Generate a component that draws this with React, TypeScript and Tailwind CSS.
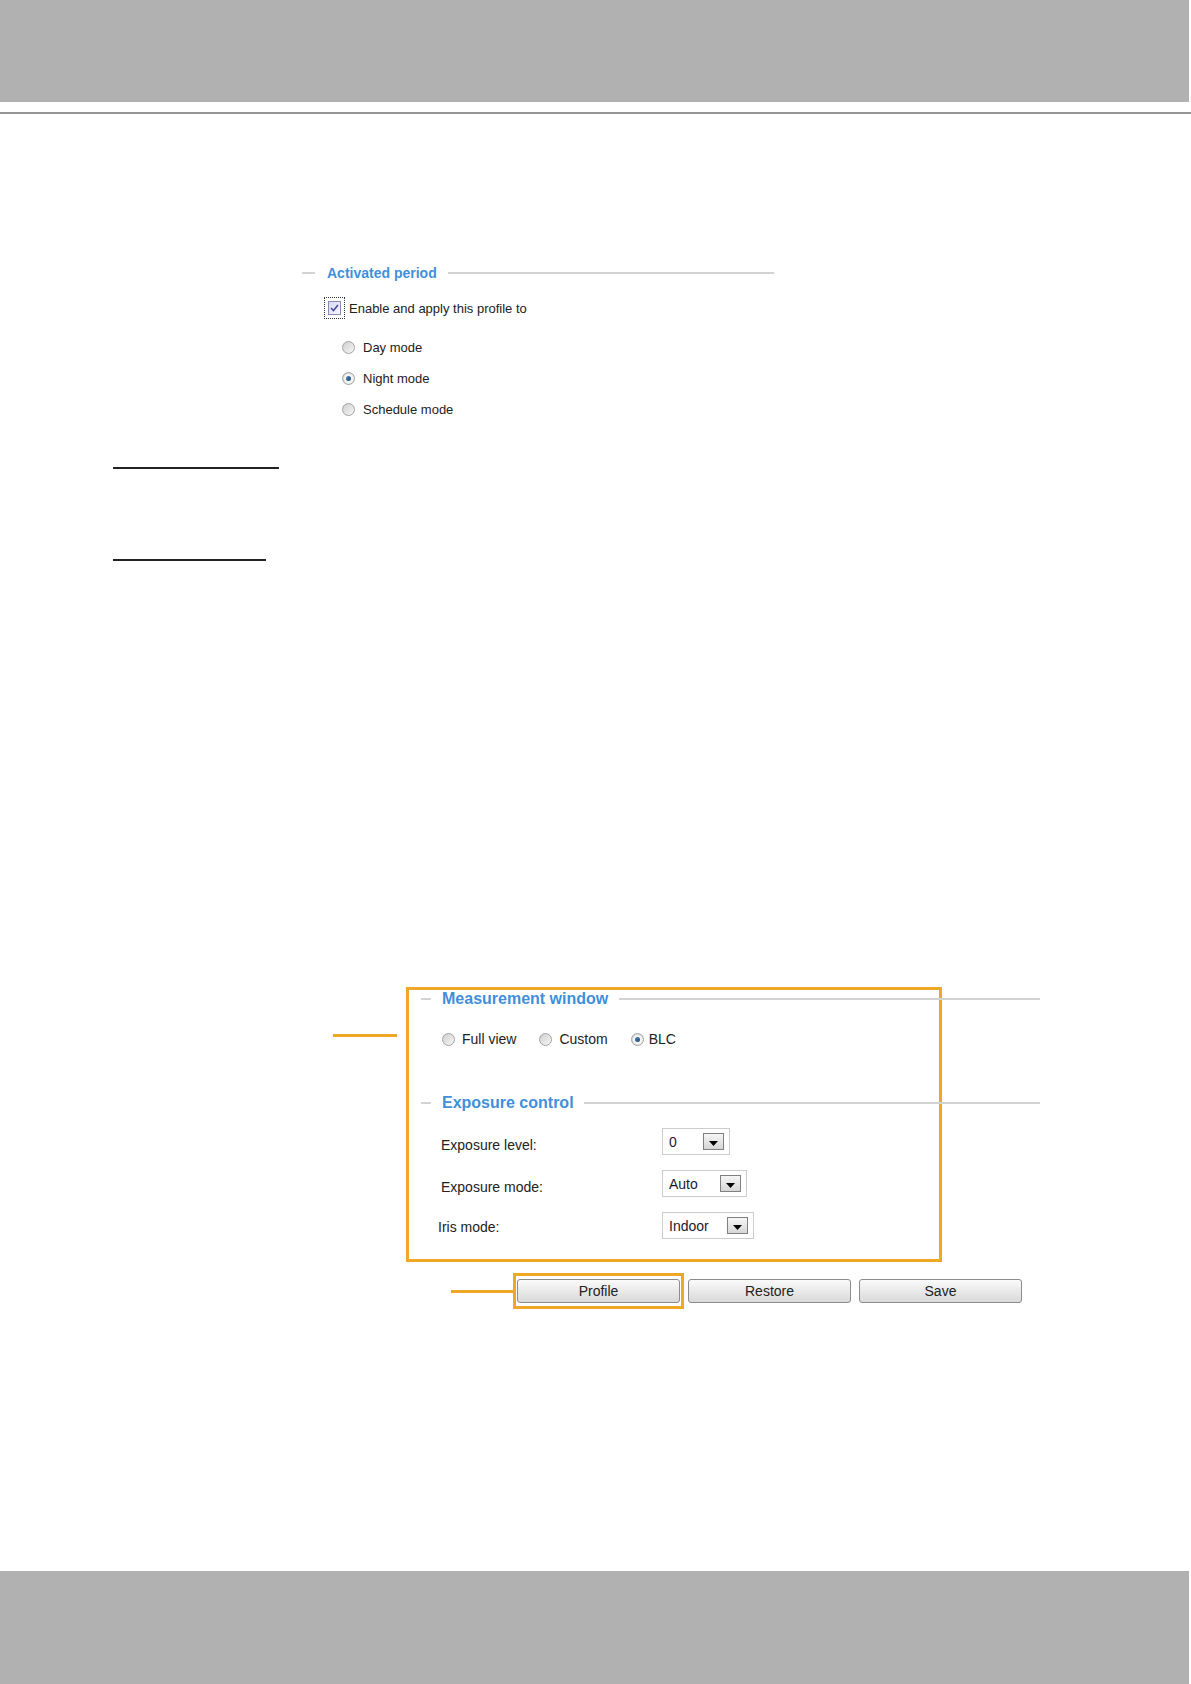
import React from "react";

const font = "font-['Liberation_Sans',Arial,sans-serif]";

function Legend({ title, dash, gap, lineGap, width }: { title: string; dash: number; gap: number; lineGap: number; width: number }) {
  return (
    <div className="flex h-[18px] items-center" style={{ width }}>
      <div className="h-[2px] bg-[#d3d3d3]" style={{ width: dash }} />
      <span
        className="whitespace-nowrap font-bold leading-none text-[#3f8fdb]"
        style={{ marginLeft: gap, marginRight: lineGap }}
      >
        {title}
      </span>
      <div className="h-[2px] flex-1 bg-[#d3d3d3]" />
    </div>
  );
}

function Radio({ checked = false }: { checked?: boolean }) {
  return (
    <span className="flex h-[13px] w-[13px] shrink-0 items-center justify-center rounded-full border border-[#a2a2a2] bg-gradient-to-br from-[#cfcfcf] to-[#f7f7f7]">
      {checked && (
        <span className="flex h-[9px] w-[9px] items-center justify-center rounded-full bg-[#f4f4f4]">
          <span className="h-[5px] w-[5px] rounded-full bg-gradient-to-br from-[#4a86b8] to-[#1d4a73]" />
        </span>
      )}
    </span>
  );
}

function Select({ value, width }: { value: string; width: number }) {
  return (
    <div
      className="flex h-[27px] items-center border border-[#cccccc] bg-white pl-[6px] pr-[5px]"
      style={{ width }}
    >
      <span className="text-[14px] leading-none text-[#1a1a2e]">{value}</span>
      <span className="ml-auto flex h-[17px] w-[21px] items-end justify-center border border-[#808080] bg-gradient-to-b from-[#f6f6f6] to-[#d6d6d6] pb-[3px]">
        <svg width="9" height="5" viewBox="0 0 9 5">
          <path d="M0 0 H9 L4.5 5 Z" fill="#000" />
        </svg>
      </span>
    </div>
  );
}

function Button({ label }: { label: string }) {
  return (
    <button className="flex h-[24px] w-[163px] items-center justify-center rounded-[3px] border border-[#8c8c8c] bg-gradient-to-b from-[#fafafa] to-[#d9d9d9] text-[14px] leading-none text-[#222]">
      {label}
    </button>
  );
}

export default function App() {
  return (
    <div className={`flex h-[1684px] w-[1191px] flex-col bg-white ${font} text-[#222]`}>
      <div className="mr-[2px] h-[102px] bg-[#b1b1b1]" />
      <div className="mt-[10px] h-[2px] bg-[#959595]" />

      {/* Activated period */}
      <div className="mt-[150px] pl-[302px] text-[14px]">
        <Legend title="Activated period" dash={13} gap={12} lineGap={11} width={472} />
        <div className="mt-[15px] flex items-center pl-[22px]">
          <span className="border border-dotted border-[#333] p-[3px]">
            <span className="flex h-[14px] w-[13px] items-center justify-center border border-[#8a8ab4] bg-gradient-to-br from-[#d9d9f2] to-[#f6f6fd]">
              <svg width="9" height="8" viewBox="0 0 9 8">
                <path d="M1 4 L3.5 6.5 L8 1" stroke="#4b4b9e" strokeWidth="1.6" fill="none" />
              </svg>
            </span>
          </span>
          <span className="ml-[4px] text-[13px] leading-none">Enable and apply this profile to</span>
        </div>
        <div className="pl-[40px] text-[13px]">
          <div className="mt-[22px] flex items-center gap-[8px]">
            <Radio />
            <span className="leading-none">Day mode</span>
          </div>
          <div className="mt-[18px] flex items-center gap-[8px]">
            <Radio checked />
            <span className="leading-none">Night mode</span>
          </div>
          <div className="mt-[18px] flex items-center gap-[8px]">
            <Radio />
            <span className="leading-none">Schedule mode</span>
          </div>
        </div>
      </div>

      <div className="ml-[113px] mt-[51px] h-[2px] w-[166px] bg-[#222]" />
      <div className="ml-[113px] mt-[90px] h-[2px] w-[153px] bg-[#222]" />

      {/* Measurement / exposure */}
      <div className="ml-[333px] mt-[426px] flex items-start">
        <div className="mt-[47px] h-[3px] w-[64px] bg-[#f0a626]" />
        <div className="ml-[9px] h-[275px] w-[536px] border-[3px] border-[#f0a626] text-[14px]">
          <div className="pl-[12px] text-[16px]">
            <Legend title="Measurement window" dash={10} gap={11} lineGap={11} width={619} />
          </div>
          <div className="mt-[24px] flex items-center gap-[23px] pl-[33px]">
            <div className="flex items-center gap-[7px]">
              <Radio />
              <span className="leading-none">Full view</span>
            </div>
            <div className="flex items-center gap-[7px]">
              <Radio />
              <span className="leading-none">Custom</span>
            </div>
            <div className="flex items-center gap-[5px]">
              <Radio checked />
              <span className="leading-none">BLC</span>
            </div>
          </div>
          <div className="mt-[48px] pl-[12px] text-[16px]">
            <Legend title="Exposure control" dash={10} gap={11} lineGap={10} width={619} />
          </div>
          <div className="mt-[16px] flex items-center">
            <span className="mt-[6px] w-[253px] pl-[32px] leading-none">Exposure level:</span>
            <Select value="0" width={68} />
          </div>
          <div className="mt-[15px] flex items-center">
            <span className="mt-[6px] w-[253px] pl-[32px] leading-none">Exposure mode:</span>
            <Select value="Auto" width={85} />
          </div>
          <div className="mt-[15px] flex items-center">
            <span className="mt-[2px] w-[253px] pl-[29px] leading-none">Iris mode:</span>
            <Select value="Indoor" width={92} />
          </div>
        </div>
      </div>

      {/* Buttons */}
      <div className="ml-[451px] mt-[11px] flex items-center">
        <div className="h-[3px] w-[62px] bg-[#f0a626]" />
        <div className="border-[3px] border-[#f0a626] px-[1px] py-[3px]">
          <Button label="Profile" />
        </div>
        <div className="ml-[4px]">
          <Button label="Restore" />
        </div>
        <div className="ml-[8px]">
          <Button label="Save" />
        </div>
      </div>

      <div className="mr-[2px] mt-auto h-[113px] bg-[#b1b1b1]" />
    </div>
  );
}
